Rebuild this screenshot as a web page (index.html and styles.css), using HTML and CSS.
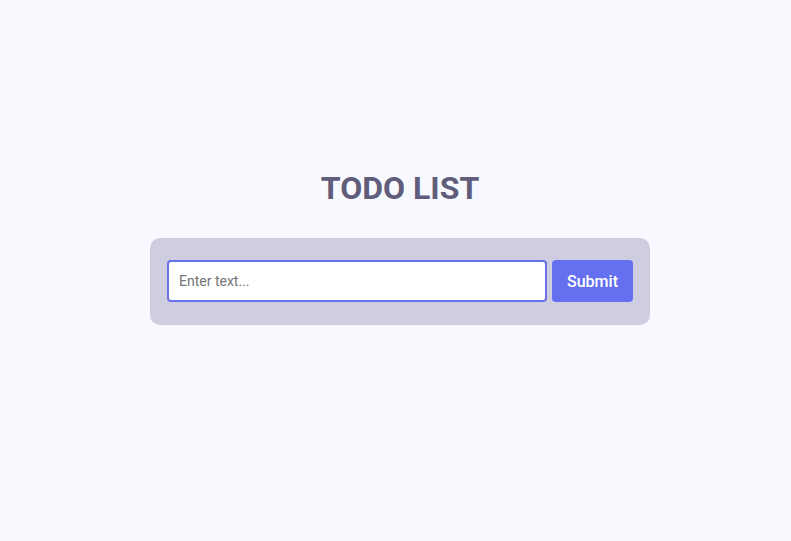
FILE: index.html
```html
<!DOCTYPE html>
<html>
<head>
<meta charset="utf-8">
<link rel="stylesheet" href="styles.css">
</head>
<body>
<main class="app">
  <h1 class="title">TODO LIST</h1>
  <form class="todo-form">
    <input class="todo-input" type="text" placeholder="Enter text...">
    <button class="todo-submit" type="button">Submit</button>
  </form>
</main>
</body>
</html>
```
FILE: styles.css
```css
html, body {
  margin: 0;
  padding: 0;
  background: #f8f9fe;
  font-family: Roboto, "Liberation Sans", sans-serif;
}
.app {
  display: flex;
  flex-direction: column;
  align-items: center;
  padding: 168px 0 0 9px;
}
.title {
  margin: 0 0 30px;
  font-size: 32px;
  line-height: 40px;
  font-weight: 700;
  color: #5f5d7b;
}
.todo-form {
  box-sizing: border-box;
  width: 500px;
  height: 87px;
  padding: 22px 17px 23px;
  background: #cfcee0;
  border-radius: 10px;
  display: flex;
  gap: 5px;
}
.todo-input {
  flex: 1;
  box-sizing: border-box;
  height: 42px;
  border: 2px solid #6a70e8;
  border-radius: 4px;
  padding: 0 10px;
  font-family: Roboto, "Liberation Sans", sans-serif;
  font-size: 14px;
  background: #fff;
  outline: none;
}
.todo-input::placeholder {
  color: #757575;
}
.todo-submit {
  box-sizing: border-box;
  width: 81px;
  height: 42px;
  border: none;
  border-radius: 4px;
  background: #6470f0;
  color: #fff;
  font-family: Roboto, "Liberation Sans", sans-serif;
  font-size: 16px;
  font-weight: 500;
  cursor: pointer;
}
```
